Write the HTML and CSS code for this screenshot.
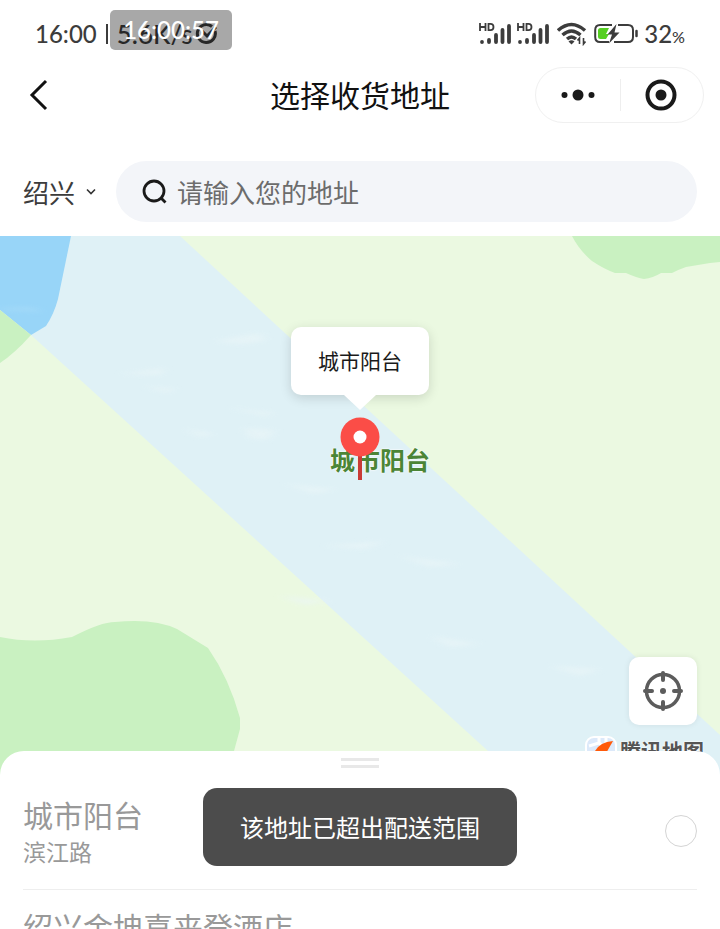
FILE: index.html
```html
<!DOCTYPE html>
<html lang="zh-CN">
<head>
    <meta charset="UTF-8">
    <meta name="viewport" content="width=device-width, initial-scale=1.0">
    <title>选择收货地址</title>
    <link rel="stylesheet" href="styles.css">
</head>
<body>
    <div class="app">
        <div class="status-bar">
            <div class="status-left">
                <span>16:00</span>
                <span class="status-sep"></span>
                <span class="speed">5.6K/s</span>
                <svg width="24" height="24" viewBox="0 0 24 24" fill="none" stroke="#3c3c3c" stroke-width="3">
                    <path d="M20 9A9 9 0 1 1 17 4.500"/>
                    <path d="M7 9l5 5 9-9"/>
                </svg>
                <span class="clock-chip">16:00:57</span>
            </div>
            <div class="status-right">
                <svg width="32" height="24" viewBox="0 0 32 24">
                    <g fill="none" stroke="#3c3c3c" stroke-width="1.800">
                        <path d="M1 1v8M6.500 1v8M1 5h5.500M9.500 1.900v6.200h2q3 0 3-3.100t-3-3.100z"/>
                    </g>
                    <g stroke="#3c3c3c" stroke-width="3.800" stroke-linecap="round">
                        <path d="M3 20v0M10 18v2M17 13v7M23.500 8v12M30 4v16"/>
                    </g>
                </svg>
                <svg width="32" height="24" viewBox="0 0 32 24">
                    <g fill="none" stroke="#3c3c3c" stroke-width="1.800">
                        <path d="M1 1v8M6.500 1v8M1 5h5.500M9.500 1.900v6.200h2q3 0 3-3.100t-3-3.100z"/>
                    </g>
                    <g stroke="#3c3c3c" stroke-width="3.800" stroke-linecap="round">
                        <path d="M3 20v0M10 18v2M17 13v7M23.500 8v12M30 4v16"/>
                    </g>
                </svg>
                <svg class="wifi" width="30" height="24" viewBox="0 0 30 24" fill="none" stroke="#3c3c3c" stroke-width="3.400">
                    <path d="M1 8.500q13.500-12 27 0M5.500 13q9-8 18 0M10 17q4.500-4 9 0"/>
                    <path d="M11.500 19.500q3-2.500 6 0l-3 3z" fill="#3c3c3c" stroke="none"/>
                    <path d="M22.500 22v-6l-2 2.500M26.500 16v6l2-2.500" stroke-width="1.600"/>
                </svg>
                <svg width="44" height="24" viewBox="0 0 44 24">
                    <path d="M18 3H6Q1.200 3 1.200 8v7q0 5 4.800 5h9M24 3h10q5 0 5 5v7q0 5-5 5H20" fill="none" stroke="#3c3c3c" stroke-width="2"/>
                    <path d="M6.500 6H15l-3 6h3l-3 5H6.500Q4 17 4 14.500v-6Q4 6 6.500 6z" fill="#56cf22"/>
                    <path d="M22.500 2L13.500 12.500h4.500L15 21.500 25.500 10.500h-5z" fill="#3c3c3c"/>
                    <path d="M42.500 9v5" stroke="#3c3c3c" stroke-width="2.500" stroke-linecap="round"/>
                </svg>
                <span>32<small>%</small></span>
            </div>
        </div>

        <header class="nav">
            <button class="back" aria-label="返回">
                <svg width="20" height="32" viewBox="0 0 20 32" fill="none" stroke="#111" stroke-width="3">
                    <path d="M17 2L3 16l14 14"/>
                </svg>
            </button>
            <h1>选择收货地址</h1>
            <div class="capsule">
                <button aria-label="更多">
                    <svg width="34" height="12" viewBox="0 0 34 12" fill="#1a1a1a">
                        <circle cx="3.500" cy="6" r="3"/>
                        <circle cx="17" cy="6" r="5.500"/>
                        <circle cx="30.500" cy="6" r="3"/>
                    </svg>
                </button>
                <button aria-label="关闭">
                    <svg width="32" height="32" viewBox="0 0 32 32">
                        <circle cx="16" cy="16" r="13.500" fill="none" stroke="#1a1a1a" stroke-width="4"/>
                        <circle cx="16" cy="16" r="5.500" fill="#1a1a1a"/>
                    </svg>
                </button>
            </div>
        </header>

        <div class="search-row">
            <button class="city">
                绍兴
                <svg width="10" height="8" viewBox="0 0 10 8" fill="none" stroke="#333" stroke-width="1.600">
                    <path d="M1 1.500l4 4 4-4"/>
                </svg>
            </button>
            <label class="search">
                <svg width="26" height="26" viewBox="0 0 26 26" fill="none" stroke="#1a1a1a" stroke-width="2.800">
                    <circle cx="12" cy="12" r="10"/>
                    <path d="M18.500 18.500l5 5"/>
                </svg>
                <input type="text" placeholder="请输入您的地址" aria-label="请输入您的地址">
            </label>
        </div>

        <main class="map">
            <svg class="map-canvas" viewBox="0 0 720 539" preserveAspectRatio="xMidYMin slice">
                <defs>
                    <filter id="soft" x="-20%" y="-200%" width="140%" height="500%">
                        <feGaussianBlur stdDeviation="5 2"/>
                    </filter>
                </defs>
                <rect width="720" height="539" fill="#ebf9e1"/>
                <!-- river -->
                <path d="M0 0H180L720 499V539H514L488 515L31 99L0 74z" fill="#dff1f6"/>
                <g filter="url(#soft)" fill="#ebf6f8" opacity=".6">
                    <path d="M215 105l45-8 5 8-25 3zM120 138l45-6-5 7zM145 150l30 3-8 4zM230 172l45 5-10 3zM185 193l30 5-15 3zM245 192l30 2-8 10-18-2zM285 248l50 5-20 5zM325 310l60-5-20 8zM280 360l50 5-25 4zM400 320l60 8-30 3zM430 400l50 8-30 3zM550 430l50 3-20 7z"/>
                </g>
                <path d="M0 0H71L58 63Q54 78 46 90L31 99L0 74z" fill="#98d5f8"/>
                <path d="M0 72l30-1 14 5-44-2z" filter="url(#soft)" fill="#abddf9" opacity=".6"/>
                <!-- parks -->
                <path d="M0 74L31 99Q15 117 0 127z" fill="#c9f1c1"/>
                <path d="M572 0Q579 14 592 25Q604 33 615 37H626Q637 42 644 43Q653 42 661 37H672Q680 33 686 31L710 27L720 26V0z" fill="#c9f1c1"/>
                <path d="M0 401Q34 408 72 401Q101 386 115 386Q154 382 177 393L208 412Q229 442 240 482V493L234 515V539H0z" fill="#c9f1c1"/>
            </svg>
            <span class="place-name">城市阳台</span>
            <div class="marker">
                <div class="bubble">城市阳台</div>
                <svg width="42" height="64" viewBox="0 0 42 64">
                    <path d="M21 36v27" stroke="#c93b36" stroke-width="4"/>
                    <circle cx="21" cy="20" r="19.500" fill="#fb4d47"/>
                    <circle cx="21" cy="20" r="6.500" fill="#fff"/>
                </svg>
            </div>
            <button class="locate" aria-label="定位">
                <svg width="42" height="42" viewBox="0 0 42 42" fill="none" stroke="#5c5c5c" stroke-width="4" stroke-linecap="round">
                    <circle cx="21" cy="21" r="16.500" stroke-width="3.500"/>
                    <path d="M21 3v7M21 32v7M3 21h7M32 21h7"/>
                    <circle cx="21" cy="21" r="3" fill="#5c5c5c" stroke="none"/>
                </svg>
            </button>
            <div class="map-logo">
                <svg width="32" height="28" viewBox="0 0 32 28">
                    <rect x="1" y="1" width="30" height="26" rx="8" fill="#dce9fa" stroke="#fff" stroke-width="2"/>
                    <path d="M4 10l10-3V2M14 7l5 4M21 2v7" fill="none" stroke="#fff" stroke-width="3"/>
                    <path d="M28 5Q15 6 10 15l10 4z" fill="#ff5a0a"/>
                    <path d="M10 15h10v4z" fill="#2f7bea"/>
                </svg>
                <span>腾讯地图</span>
            </div>
        </main>

        <section class="sheet">
            <div class="handle"></div>
            <ul>
                <li>
                    <label for="addr1">
                        <span class="name">城市阳台</span>
                        <span class="detail">滨江路</span>
                    </label>
                    <input type="radio" name="address" id="addr1">
                </li>
                <li>
                    <span class="name">绍兴金坤喜来登酒店</span>
                </li>
            </ul>
        </section>

        <div class="toast" role="alert">该地址已超出配送范围</div>
    </div>
</body>
</html>
```
FILE: styles.css
```css
* {
    box-sizing: border-box;
}
body {
    margin: 0;
    background-color: #fff;
    color: #1a1a1a;
    font-family: "Noto Sans CJK SC", sans-serif;
}
button {
    padding: 0;
    border: none;
    background: none;
    color: inherit;
    font-family: inherit;
    cursor: pointer;
}
svg {
    display: block;
    flex-shrink: 0;
}
.app {
    position: relative;
    display: flex;
    flex-direction: column;
    height: 100vh;
    overflow: hidden;
}

/* status bar */
.status-bar {
    display: flex;
    justify-content: space-between;
    align-items: center;
    height: 67px;
    padding: 0 35px;
    color: #3c3c3c;
    font-family: Lato, sans-serif;
    font-size: 24px;
    font-weight: 500;
}
.status-left,
.status-right {
    position: relative;
    display: flex;
    align-items: center;
}
.status-sep {
    width: 2px;
    height: 20px;
    margin: 0 9px;
    background-color: #3c3c3c;
}
.speed {
    font-size: 26px;
    margin-right: 2px;
}
.clock-chip {
    position: absolute;
    left: 75px;
    top: -8px;
    width: 122px;
    line-height: 40px;
    text-align: center;
    color: #fff;
    background-color: rgba(0, 0, 0, 0.34);
    border-radius: 5px;
}
.status-right {
    gap: 6px;
}
.status-right small {
    font-size: 16px;
}
.wifi {
    margin: 0 1px 0 2px;
}

/* title */
.nav {
    display: grid;
    grid-template-columns: 1fr auto 1fr;
    align-items: center;
    padding: 0 16px;
}
.nav h1 {
    margin: 0 0 3px;
    font-size: 30px;
    font-weight: 400;
    line-height: 38px;
    color: #111;
}
.back {
    justify-self: start;
    margin-left: 13px;
}
.capsule {
    justify-self: end;
    display: flex;
    width: 169px;
    height: 56px;
    border: 1px solid #f0f0f0;
    border-radius: 28px;
}
.capsule button {
    flex: 1;
    display: flex;
    align-items: center;
    justify-content: center;
}
.capsule button + button {
    position: relative;
}
.capsule button + button::before {
    content: "";
    position: absolute;
    left: 0;
    top: 11px;
    bottom: 11px;
    width: 1px;
    background-color: #eee;
}

/* search */
.search-row {
    display: flex;
    align-items: center;
    gap: 20px;
    padding: 38px 23px 14px;
}
.city {
    display: flex;
    align-items: center;
    gap: 11px;
    font-size: 26px;
    line-height: 40px;
    color: #3c3c3c;
}
.search {
    flex: 1;
    display: flex;
    align-items: center;
    gap: 9px;
    height: 61px;
    padding: 0 26px;
    background-color: #f3f5f9;
    border-radius: 31px;
}
.search input {
    flex: 1;
    min-width: 0;
    padding: 0;
    border: none;
    outline: none;
    background: none;
    font-family: inherit;
    font-size: 26px;
    line-height: 40px;
}
.search input::placeholder {
    color: #6c6c6c;
    opacity: 1;
}

/* map */
.map {
    position: relative;
    flex: 1;
    min-height: 0;
    overflow: hidden;
    background-color: #ebf9e1;
}
.map-canvas {
    position: absolute;
    left: 0;
    top: 0;
    width: 100%;
    height: 100%;
}
.place-name {
    position: absolute;
    left: calc(50% - 30px);
    top: 207px;
    font-size: 25px;
    font-weight: 700;
    line-height: 32px;
    color: #4b8536;
    text-shadow: 0 0 2px #fff, 0 0 2px #fff;
}
.marker {
    position: absolute;
    left: 0;
    right: 0;
    top: 91px;
    display: flex;
    flex-direction: column;
    align-items: center;
    gap: 22px;
}
.bubble {
    position: relative;
    padding: 0 27px 2px;
    font-size: 21px;
    line-height: 66px;
    background-color: #fff;
    border-radius: 10px;
    box-shadow: 0 3px 12px rgba(0, 0, 0, 0.14);
}
.bubble::after {
    content: "";
    position: absolute;
    left: calc(50% - 16px);
    top: 100%;
    border: 16px solid transparent;
    border-top: 15px solid #fff;
    border-bottom: none;
}
.locate {
    position: absolute;
    right: 23px;
    bottom: 50px;
    display: flex;
    align-items: center;
    justify-content: center;
    width: 68px;
    height: 68px;
    background-color: #fff;
    border-radius: 10px;
    box-shadow: 0 0 6px rgba(0, 0, 0, 0.08);
}
.map-logo {
    position: absolute;
    right: 16px;
    bottom: 9px;
    display: flex;
    align-items: center;
    gap: 3px;
    font-size: 21px;
    font-weight: 700;
    line-height: 32px;
    color: #555;
    text-shadow: 0 0 2px #fff, 0 0 2px #fff;
}

/* address list */
.sheet {
    position: relative;
    flex: 0 0 178px;
    margin-top: -24px;
    overflow: hidden;
    padding: 7px 23px 0;
    background-color: #fff;
    border-radius: 24px 24px 0 0;
}
.handle {
    width: 38px;
    height: 10px;
    margin: 0 auto 10px;
    border: solid #e8e8e8;
    border-width: 3px 0;
}
.sheet ul {
    margin: 0;
    padding: 0;
    list-style: none;
}
.sheet li {
    display: flex;
    align-items: center;
    justify-content: space-between;
    padding: 16px 0 21px;
    border-bottom: 1px solid #eee;
    color: #999;
}
.sheet label {
    display: flex;
    flex-direction: column;
}
.name {
    font-size: 30px;
    line-height: 40px;
}
.detail {
    font-size: 23px;
    line-height: 34px;
}
.sheet input {
    appearance: none;
    width: 32px;
    height: 32px;
    margin: 0;
    border: 1px solid #d4d4d4;
    border-radius: 50%;
}

.toast {
    position: absolute;
    left: 50%;
    bottom: 63px;
    transform: translateX(-50%);
    padding: 0 37px;
    font-size: 24px;
    line-height: 78px;
    white-space: nowrap;
    color: #fff;
    background-color: #4c4c4c;
    border-radius: 14px;
}
```
